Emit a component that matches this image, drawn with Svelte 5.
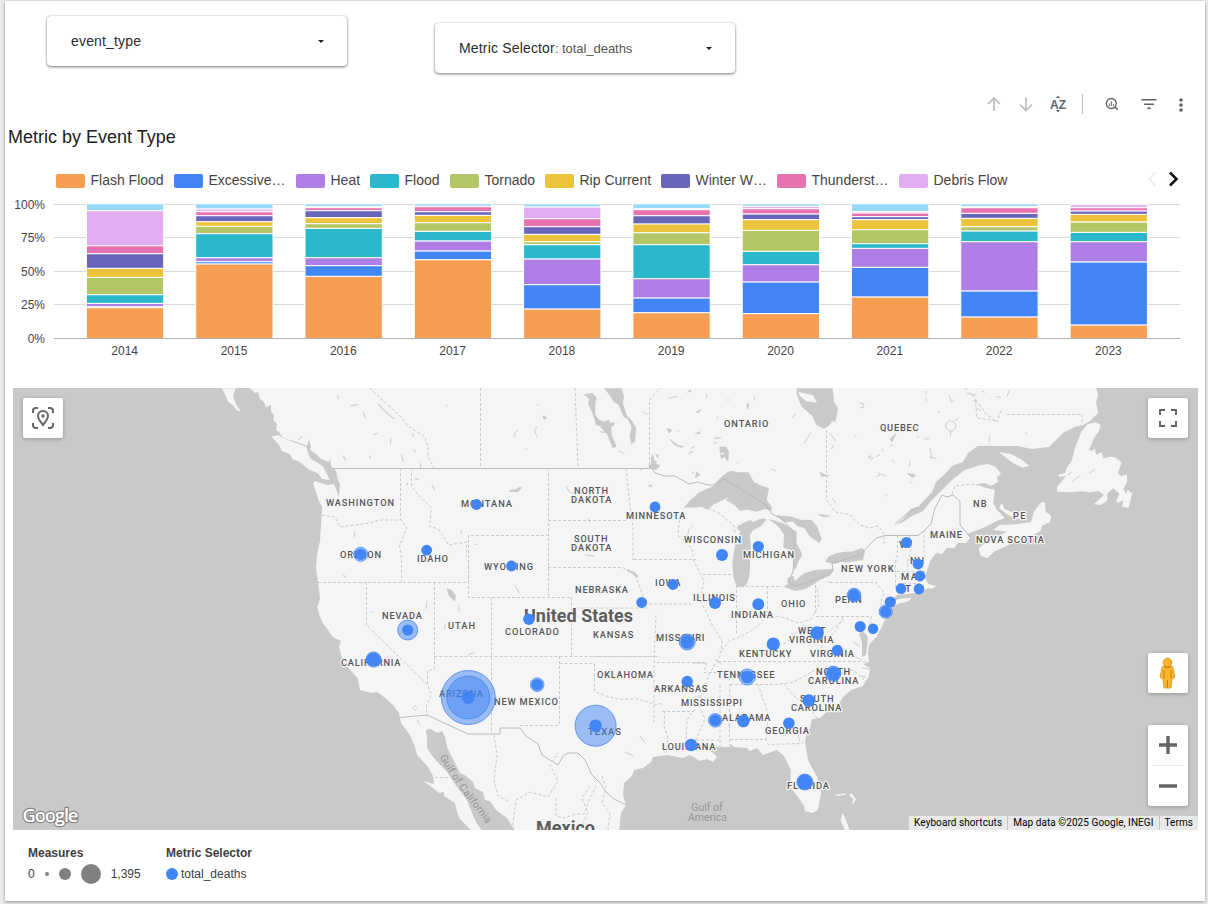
<script>
  const colors = ['#97d8f5', '#e3aef1', '#e673b0', '#6766ba', '#ebc43b', '#b4c766', '#2bb8cb', '#ae7ee6', '#4285f4', '#f69e52'];
  // Segment boundaries in thirds of a pixel, from the 100% line down to the axis.
  const years = [
    { year: 2014, cuts: [28, 46, 151, 175, 219, 246, 298, 324, 334, 337, 430] },
    { year: 2015, cuts: [28, 41, 49, 61, 79, 93, 115, 187, 199, 206, 430] },
    { year: 2016, cuts: [28, 34, 37, 46, 67, 85, 99, 187, 211, 243, 430] },
    { year: 2017, cuts: [28, 33, 34, 49, 60, 82, 108, 137, 167, 193, 430] },
    { year: 2018, cuts: [28, 35, 70, 94, 117, 139, 148, 191, 268, 341, 430] },
    { year: 2019, cuts: [28, 40, 43, 61, 86, 112, 148, 250, 308, 352, 430] },
    { year: 2020, cuts: [28, 33, 40, 56, 73, 105, 168, 208, 260, 355, 430] },
    { year: 2021, cuts: [28, 49, 53, 64, 73, 103, 145, 159, 216, 305, 430] },
    { year: 2022, cuts: [28, 34, 37, 54, 69, 94, 107, 139, 287, 365, 430] },
    { year: 2023, cuts: [28, 28, 37, 47, 57, 80, 111, 139, 200, 389, 430] }
  ];
  const ticks = [['100%', 205], ['75%', 238], ['50%', 272], ['25%', 305], ['0%', 339]];
  const legend = [
    ['Flash Flood', '#f69e52'], ['Excessive…', '#4285f4'], ['Heat', '#ae7ee6'], ['Flood', '#2bb8cb'], ['Tornado', '#b4c766'],
    ['Rip Current', '#ebc43b'], ['Winter W…', '#6766ba'], ['Thunderst…', '#e673b0'], ['Debris Flow', '#e3aef1']
  ];
  // text, left, right, baseline
  const labels = [
    ['WASHINGTON', 326, 393, 506.5], ['MONTANA', 461, 511, 507.5], ['OREGON', 340, 380, 558.5], ['IDAHO', 417, 447, 562.5],
    ['WYOMING', 484, 532, 570.5], ['NORTH', 574, 607, 494.5], ['DAKOTA', 571, 610.5, 503.5], ['SOUTH', 574, 606.5, 542.5],
    ['DAKOTA', 571, 610.5, 551.5], ['MINNESOTA', 626, 684.5, 519.5], ['ONTARIO', 724, 767.5, 427.5], ['WISCONSIN', 684, 740, 543.5],
    ['MICHIGAN', 743, 793, 558.5], ['NEBRASKA', 575, 627, 593.5], ['IOWA', 655, 679.5, 586.5], ['ILLINOIS', 693, 734, 601.5],
    ['OHIO', 781, 804.5, 607.5], ['INDIANA', 731, 772, 618.5], ['PENN', 835, 860.5, 603.5], ['QUEBEC', 880, 917.5, 431.5],
    ['NEW YORK', 841, 892.5, 572.5], ['MAINE', 930, 961, 538.5], ['NB', 973, 985.5, 507.5], ['PE', 1013, 1024.5, 519.5],
    ['NOVA SCOTIA', 976, 1043, 543.5], ['VT', 899, 911, 548.5], ['NH', 910, 923, 564.5], ['MA', 901, 916, 580.5], ['CT', 898, 910, 592.5],
    ['NEVADA', 382, 421, 619.5], ['UTAH', 448, 474, 629.5], ['COLORADO', 505, 558, 635.5], ['KANSAS', 593, 632.5, 638.5],
    ['CALIFORNIA', 341, 399.5, 666.5], ['ARIZONA', 439, 482, 697.5], ['NEW MEXICO', 494, 557, 705.5], ['OKLAHOMA', 597, 652, 678.5],
    ['TEXAS', 588, 620, 735.5], ['MISSOURI', 656, 703.5, 641.5], ['ARKANSAS', 654, 706.5, 692.5], ['MISSISSIPPI', 681, 741, 706.5],
    ['ALABAMA', 722, 769.5, 721.5], ['LOUISIANA', 662, 714.5, 750.5], ['GEORGIA', 765, 808, 734.5], ['FLORIDA', 787, 828, 789.5],
    ['TENNESSEE', 717, 773.5, 678.5], ['KENTUCKY', 739, 790.5, 657.5], ['VIRGINIA', 810, 853, 657.5], ['WEST', 798, 824.5, 634.5],
    ['VIRGINIA', 789, 832.5, 643.5], ['NORTH', 816, 849, 675.5], ['CAROLINA', 808, 857.5, 684.5], ['SOUTH', 800, 832.5, 702.5], ['CAROLINA', 791, 840.5, 711.5]
  ];
  // x, y, core radius, outer radii
  const dots = [
    [476.5, 504.5, 5.4], [360.7, 554.3, 5.6, 7], [426.7, 550.2, 5.4], [511.5, 566, 5.4], [655, 507, 5.4], [722, 555, 6], [758.3, 546.5, 5.6],
    [673, 584.5, 5.4], [641.7, 602.5, 5.4], [715, 603, 6], [758.3, 604.3, 6], [854, 595, 6, 6.8], [906.5, 542.5, 5.6], [918, 564, 5.4],
    [920, 576, 5.4], [901, 588.7, 5.4], [919, 589, 5.4], [890.3, 602, 5.6], [885.7, 611.7, 5.6, 6.6], [860.2, 626.5, 5.5], [873, 628.7, 5.2],
    [407.7, 630, 5.6, 10], [373.5, 659.5, 7, 7.6], [468.3, 697.5, 6.5, 21.5, 27], [537.2, 684.7, 5.8, 6.8], [528.8, 619.2, 5.7],
    [595.6, 725.7, 6.3, 20.5], [687.2, 642, 6.8, 8], [687.2, 681.5, 5.7], [747.3, 677, 6.3, 8], [773.3, 644, 6.6], [817, 633, 6.8],
    [837.3, 650.3, 5.5], [833.3, 673.7, 6.8, 7.6], [808.7, 700.5, 6.3], [715.2, 720.3, 5.8, 6.8], [743.4, 721, 6.3], [788.9, 723.2, 5.8],
    [691, 745, 6.2], [804.8, 782, 7.4, 8]
  ];
</script>

<main class="report">
  <header class="filters">
    <div class="select"><span class="name">event_type</span><i class="caret"></i></div>
    <div class="select second"><span><span class="name">Metric Selector</span><span class="value">: total_deaths</span></span><i class="caret"></i></div>
  </header>

  <nav class="tools">
    <svg viewBox="975 90 225 28" width="225" height="28" fill="none">
      <g stroke="#bdbdbd" stroke-width="1.7">
        <path d="M994 111V98.500M988 104l6-6 6 6M1026 97.500V110M1020 104.500l6 6 6-6" />
      </g>
      <g fill="#5f6368">
        <text class="az" x="1050" y="108.500" textLength="16">AZ</text>
        <path d="M1055.800 98l2.200-2.200 2.200 2.200zM1055.800 110l2.200 2.200 2.200-2.200z" />
      </g>
      <path d="M1082.500 94v20" stroke="#bdbdbd" />
      <g stroke="#5f6368"><circle cx="1111.300" cy="103.500" r="5" stroke-width="1.300" /><path d="M1115 107l2.700 2.700" stroke-width="1.600" /><path d="M1109.300 103.500v2.500M1111.300 101.300v4.700M1113.400 104v2" stroke-width="1" /></g>
      <path d="M1141.500 99.700h15M1144 104.200h10M1147.300 108.300h3.500" stroke="#5f6368" stroke-width="1.600" />
      <g fill="#5f6368"><circle cx="1181" cy="100" r="1.800" /><circle cx="1181" cy="105" r="1.800" /><circle cx="1181" cy="110" r="1.800" /></g>
    </svg>
  </nav>

  <h1>Metric by Event Type</h1>

  <section class="legend">
    {#each legend as [name, color]}
      <span class="entry"><i style:background={color}></i>{name}</span>
    {/each}
    <svg viewBox="1143 168 40 22" width="40" height="22" fill="none"><path d="M1155.500 171.500l-6.500 6.500 6.500 6.500" stroke="#eee" stroke-width="1.800" /><path d="M1170 171.500l6.500 6.500-6.500 6.500" stroke="#111" stroke-width="2.500" /></svg>
  </section>

  <svg class="chart" viewBox="5 196 1200 168" width="1200" height="168">
    {#each ticks as [label, y]}
      <path d="M54 {y - 0.5}H1180" stroke={label === '0%' ? '#b0b0b0' : '#dadada'} />
      <text x="45" y={y + 4} text-anchor="end">{label}</text>
    {/each}
    {#each years as row, i}
      <g stroke="#fff" stroke-width="1">
        {#each colors as color, k}
          {#if row.cuts[k + 1] > row.cuts[k]}
            <rect x={86.4 + i * 109.3} y={195 + row.cuts[k] / 3 + (k ? 0.4 : -0.5)} width="77.3" height={(row.cuts[k + 1] - row.cuts[k]) / 3 + (k ? 0 : 0.9)} fill={color} />
          {/if}
        {/each}
      </g>
      <text x={124.700 + i * 109.3} y="355" text-anchor="middle">{row.year}</text>
    {/each}
    <path d="M54 338.500H1180" stroke="#b0b0b0" />
  </svg>

  <section class="map">
    <svg class="canvas" viewBox="13 388 1185 442" width="1185" height="442">
      <rect x="13" y="388" width="1185" height="442" fill="#c9c9c9" />
      <g class="land">
        <path d="M248 386L255 393 258 392 260 399 264 402 266 407 271 405 271 412 274 415 273 420 277 424 276 430 279 432 283 438 290 440 300 443 307 446 309 439 311 447 310 450 316 454 321 459 329 462 330 458 331 466 336 471 338 480 340 484 339 497 336 489 334 484 327 485 315 481 313 483 316 492 319 501 322 507 321 525 320 541 317 554 316 568 318 581 320 598 317 610 317 604 319 614 322 622 325 626 333 637 341 641 339 647 342 658 348 667 358 679 360 690 372 693 377 692 384 697 393 705 399 713 401 723 410 735 415 747 417 755 428 767 433 776 434 784 423 781 433 788 439 793 444 792 444 796 455 803 457 812 460 819 471 830 483 832 477 824 472 813 467 800 457 787 447 772 433 757 427 748 427 738 426 730 431 729 437 733 442 731 445 737 447 747 452 757 460 773 466 776 473 782 475 788 483 792 485 800 490 801 496 810 507 818 516 832 619 832 621 813 626 805 623 795 624 783 632 776 634 770 643 768 651 762 653 757 667 755 683 758 690 755 700 761 707 759 713 762 717 757 722 762 717 757 712 752 707 750 713 747 730 747 731 744 734 747 747 748 750 751 757 748 763 755 777 750 784 756 787 762 791 770 790 787 794 792 798 797 804 806 805 811 812 813 818 810 821 793 819 784 817 777 808 760 805 743 806 735 810 728 812 719 820 718 828 711 837 707 843 697 851 690 863 686 869 676 870 668 863 664 869 662 868 653 869 645 877 636 882 626 885 620 890 615 892 606 894 598 897 595 907 594 922 592 928 588 932 589 936 586 928 584 925 577 928 568 930 561 936 553 942 554 947 548 954 548 958 543 966 543 970 538 967 534 983 528 997 521 1005 518 997 510 993 503 995 490 983 487 977 484 985 483 991 486 998 482 997 477 1001 474 996 467 988 464 980 465 965 470 952 480 941 491 931 501 923 511 910 517 903 522 896 525 904 518 911 509 918 507 932 492 936 482 946 473 952 466 963 462 968 453 978 446 1017 446 1032 449 1049 447 1063 433 1075 427 1083 425 1090 421 1098 413 1096 402 1098 395 1096 386z" />
        <g transform="translate(200 385) scale(.33333)"><path d="M215 155l20-5 15 10 28 10 40 15 12 35 38 23 22 43-24-5-13-16-28-12-14-12-16-12-17-6-9-16-24-9-8-19zM65 10h42l-8 25 10 24 13 20-10-2-13-16-14-10-8-19z" /></g>
        <g transform="translate(850 385) scale(.33333)"><path d="M430 435L448 420 498 418 543 411 553 379 573 352 585 352 587 380 604 393 600 412 576 422 572 438 545 452 502 465 465 485 432 500 412 520 392 512 386 490 405 475 432 465 452 450 472 440zM455 353L463 371 485 381 523 385 528 399 498 402 470 387 448 370zM447 201L482 207 512 222 538 242 518 248 488 234 470 220zM738 112L752 120 746 140 732 158 717 195 727 198 735 189 738 209 755 202 760 220 780 215 795 217 815 232 803 264 812 274 830 268 832 290 820 310 828 327 834 313 842 325 848 318 836 368 816 365 820 345 806 353 798 350 808 326 790 310 772 326 772 346 752 360 732 358 745 345 762 330 745 318 720 322 695 319 660 322 622 320 621 306 638 285 648 272 628 276 624 270 645 264 650 248 664 230 672 200 682 170 694 140 712 118zM130 648L150 641 185 638 173 650 133 658z" /></g>
        <g transform="translate(590 600) scale(.33333)"><path d="M737 586l30-4-28 4zM784 583l12 14-8 14 4-14-12-12zM758 644l8 16 10 28h-10l-12-25 2-12zM900 12l30-7 15-5-25 12z" stroke="#f5f5f5" stroke-width="4" /></g>
      </g>

      <g fill="#c9c9c9" transform="translate(500 385) scale(.33333)">
        <path d="M550 368L572 345 596 323 640 303 660 280 684 260 698 257 710 262 746 262 762 292 785 302 807 310 800 345 815 365 815 377 795 372 770 380 742 374 720 378 706 362 690 352 678 346 688 333 696 331 662 348 642 358 622 374 606 366zM712 424L738 410 753 405 758 412 778 403 792 400 800 404 782 424 760 436 750 448 752 480 750 545 748 575 738 602 722 606 710 604 700 575 697 530 703 495 708 465 722 440 712 432z" />
        <path d="M804 402L820 406 848 414 872 430 890 440 890 475 898 490 907 510 895 530 888 550 880 555 879 500 862 492 850 488 852 450 840 430 825 416zM828 390L876 395 902 404 935 405 952 425 965 462 958 474 930 455 912 428 892 424 880 410 850 410zM850 605L864 597 862 580 880 572 884 588 912 565 945 555 1002 552 990 572 960 584 938 600 915 612 885 618zM975 530L987 514 1011 504 1050 499V533L1024 531 1002 537zM890 10h108l4 40 12 20-8 42-10-4-6 12-18 12-22-12-14-28-32-28-14-38zM312 10h52l8 24-3 22 12 36 14 14 14 24-4 40-12 8-4-24 6-28-12-24-12-6-16-38-14-6-10-18zM250 28L278 24 290 40 286 56 286 90 298 104 312 110 326 104 332 114 344 112 342 122 334 125 335 150 350 185 338 189 322 150 300 124 288 120 278 86 264 56 268 42z" />
        <path d="M454 222l4-14 4 18 8 4-4 6 14 6-12 12-18-4 4-14zM660 186h18l8 14-2 28-6-6-8-22-10 4zM662 208l16 4-14 8zM722 422l10 12-10 10zM130 93l8 2v8l-8-2zM110 57l6 4zM382 553l20 9 12 10-2 6-14-12-16-8zM502 130l14 6-10 8zM510 162l14 12 12 8 14 2-4 4-22-8-10-12zM590 80l12-6v4l-12 5zM600 140l-14 6 14 0zM740 60l4 12 2-18zM645 158h18l-20 3zM590 260l10 10-14 8zM955 388l20 2 14 4-20 2zM960 262l12 6 16 4-24 2zM445 303l10-4v6zM467 208l6 12 2-10zM300 140l24 3zM30 316l20-2 8-8 6 2-10 12-26 0zM522 38l10-4zM562 22l8-8 4 4z" stroke="#c9c9c9" stroke-width="2" />
      </g>
      <path d="M798 392l15 3 4 8-11-2-6-5z" fill="#f5f5f5" />
      <path d="M850 552L862 548 865 551 863 560 850 562z" fill="#c9c9c9" />
      <path d="M862 631L866 634 868 638 866 655 862 657 862 642 859 634zM869 620l2 8 4 6-4-2z" fill="#c9c9c9" />
      <g fill="none" stroke="#cdcdcd" stroke-width="1.2">
        <g transform="translate(200 385) scale(.33333)" stroke-width="3.500"><path d="M535 57l18 20 30 26M412 30l4 12M452 62l22-3M490 80l6 20M520 150l14-6M572 160v16M604 208l6 22M642 192l4 10M638 145l3 10M662 235v14M430 212l8 16M296 165l10-12M620 292l3 8M697 300l6 14M645 281l12 2M465 440l-2 16M430 571l8 6M783 435l2 10M826 478h6M508 212l4 8M740 60v4M485 592v6" /><path d="M742 612l12 4 12 16-2 14-16-14z" fill="#c9c9c9" /></g>
        <g transform="translate(500 385) scale(.33333)" stroke-width="3"><path d="M42 156l4-14 8-6M110 124l-6 16 8 16M75 190l8 5M200 305l8 16 14 5M255 510l30 3M265 400l5 12M428 80l14 8M356 198l18 8M912 176l20-33M990 145l16 22M876 97l14-12M985 80l20-12M1000 180l-6 12M44 600l14 24M580 420l-14 14-3 16M420 255l6-3M650 100l4-5M585 185l-12 5M815 252l12 6M998 340l8 14M470 350l6-2M580 200l-10 2M505 40l16-4M620 40v-12M680 45h8M762 47l3-12M640 175l12-4M565 205l8-1M710 232l6 2M575 265l8-3M530 135l8 4" /></g>
        <g transform="translate(850 385) scale(.33333)" stroke-width="3"><path d="M28 54l14 3-2 10-10 1M20 150l-6 6M55 215l14 4-8 6M90 270l-4-8M78 275l18-8 12 8M180 228l-2 16M224 163l14-4M238 215l22 6M240 190l6 30M370 45l10 10M328 98l-14 10M418 152v18M478 15l-6 18M527 142l4 6M665 262l-12 8M667 288l24-16M735 252l-18 14M350 25l30 5M105 335l4-6M130 180l-10 4M302 138v15M62 210l-8 12M78 215l12-6M298 30l6 22 10-8M228 18v10M226 38l6 10M182 290l4 6M262 78l8 4M200 155l6 2M125 225l8 8M95 192l6 8M380 70l12 6M395 18l10 4M440 35l12 2" /><circle cx="302" cy="123" r="15" /><path d="M120 163l18-18-12 26zM172 265l24 5-8 8z" fill="#c9c9c9" /></g>
        <path d="M427 601l-1 8M459 605v7M468 655l7-3M412 707l4 4M417 720l3 5M371 611l2 2M414 705l3 3M445 624v6M715 659l3 3 4 2M692 663l14 0M640 736l5 7M625 752l9 4M862 660l-8-4M870 669l-8-1M866 677l-6-1M800 742l-2-6M804 790l-3-3M730 728l-1-5M860 646l-7-4" stroke-width="1" />
      </g>

      <g fill="none" stroke="#bababa" stroke-width="1">
        <path d="M333 468.500H649.500V465L655 473 665 476 675 476 689 484 698 482 708 485 713 485 724 479 727 481 765 504 772 514 782 519 793 531 795 550 793 572 788 582 795 586 806 583 822 577 833 571 832 563 850 558 860 555 876 538 885 535.500H918L924 531 931 524 935 508 942 495 947 497 953 495 960 501V525L967 533 970 537M400 717.500L427 715 468 734H500V728H520L526 736 538 744 542 755 550 760 558 765 563 756 568 753H578L585 760 592 775 600 783 607 793 614 799 626 805" />
        <path d="M895 524L903 517 910 511 918 507" stroke="#b8b8b8" />
      </g>
      <g fill="none" stroke="#cacaca" stroke-width="1" stroke-dasharray="3 2">
        <path d="M370 388l8 8 22 20 8 10 17 11 3 10v9l6 12M480.500 388v80M575 388l3 80M649.500 465v-65l11-12M826.500 430v70l9 12 15 3M322 515l13 2 5 10 30-4 10-3h21M400.500 468v50l6 10-7 18 2 12v24M411.500 468v18l8 10 12 12-2 18 9 3 10 16 18-3v14M318 582.500h150.500V535.500H548M548.500 468v128M468.500 561v36.500h103M366.500 582v43l61 60 4 10-5 10v12M434.500 582v75M434.500 656.500H660M434.500 656.500V669l-7 2v13M491.500 597.500v137M571.500 597.500v58M548 520.500h80M548 567.500h74l12 5 6 15 6 17M571.500 597v11h76M559.500 656v69M559.500 663.500h35v28l10 4 15 4 16-1 20 6 6-1M520 725.500h39.500M626 468l3 30 4 30 0 32M634 559.500h62M649 604h42M656 615l-2 50v57M656 656.500h-66M657 662.500h50l-3 10h14M704 506l16 8 14 12 1 8M680 515l-2 20 14 14 2 12 10 20-4 20 6 10 6 14 10 16-1 13-12 21-8 20-1 12 5 12-10 22" />
        <path d="M703 574.500h30M736.500 585v50M736 586.500h46M767.500 586v30l-12 12-14 8-12 5-10 12M767 619l12-3 20 7 12-4 8-14 -2-18M815.500 585v30M816 616.500h55v14M830 582.500h46l8 10-4 12 5 7M831 582h-6M718 661.500h150M730 684.500h46l16-2 12-6 14-8 20-1 4 3h12l16 15M720 685v68M730 684l-1 40 1 22M758 684l10 30-2 28M730 739.500h36l2 5 34-1 3-4M662 711.500h32M665 711l-1 15 4 12-2 15M696 740h26M784 684l10 12 16 12 8 12M804 625l-18 18-12 2-10 10M820 640l10-10 14-10M843 617l-6 12-14 16-9 12M700 690l-3 16-10 14-1 20M897.500 535v20l-2 8v24M909 535l3 10-4 16-1 10M924 530l0 33-2 5M897 571.500h28M898 583.500h22M850 515l10 10 10 3 8-2 6 8v10M952 494l3-8 18-2 12 3M976 400l10 14 11 8 5-14M1007 414.500h75v8M965 388l10 10 2 20 20 3M494 735l3 20-3 25 4 16 12 6M512 830l4-30 14-8 18 5 10-16-8-16 8-12M556 798l0 18 8 2 12-4 8 0 6-16 6-12M435 777.500h18M590 786l-8 12 6 14-8 18M602 776l4 12-4 14 8 12-2 16" />
      </g>

      <g class="states">
        {#each labels as [text, left, right, y]}
          <text x={left} y={y - 0.3} textLength={right - left + 1}>{text}</text>
        {/each}
      </g>
      <text class="country" x="524" y="622" textLength="109">United States</text>
      <text class="country" x="536" y="834" textLength="59">Mexico</text>
      <g class="sea">
        <text x="707" y="811" text-anchor="middle">Gulf of</text>
        <text x="707.500" y="821" text-anchor="middle">America</text>
        <path id="gulf" d="M439.500 757c6 11 12 20 22 34 10 13 16 20 25 33" fill="none" />
        <text><textPath href="#gulf" textLength="82">Gulf of California</textPath></text>
      </g>

      <g>
        {#each dots as [x, y, core, ...outer]}
          {#each outer as r}
            <circle cx={x} cy={y} {r} fill="#4285f4" fill-opacity=".5" stroke="#4285f4" stroke-width=".8" />
          {/each}
          <circle cx={x} cy={y} r={core} fill="#4285f4" />
        {/each}
      </g>
      <text class="google" x="22.500" y="822" textLength="56">Google</text>
    </svg>

    <button class="ctl lens" aria-label="Select area">
      <svg viewBox="0 0 40 40" width="40" height="40" fill="none" stroke="#666" stroke-width="2"><path d="M10 15v-2q0-3 3-3h2M25 10h2q3 0 3 3v2M30 25v2q0 3-3 3h-2M15 30h-2q-3 0-3-3v-2" /><path d="M20 27c-3-4-5-6-5-9a5 5 0 0 1 10 0c0 3-2 5-5 9z" /><circle cx="20" cy="18" r="1.700" fill="#666" stroke="none" /></svg>
    </button>
    <button class="ctl full" aria-label="Fullscreen">
      <svg viewBox="0 0 40 40" width="40" height="40" fill="none" stroke="#666" stroke-width="2"><path d="M12 17v-5h5M23 12h5v5M28 23v5h-5M17 28h-5v-5" /></svg>
    </button>
    <button class="ctl peg" aria-label="Street view">
      <svg viewBox="0 0 40 40" width="40" height="40"><path d="M14 15q0-2 2-2h7q2 0 2 2l2 9-3 2-1 9h-7l-1-9-3-2z" fill="#fbb62a" stroke="#c58a1e" stroke-width=".7" /><circle cx="19.500" cy="9.500" r="4.300" fill="#fbb62a" stroke="#c58a1e" stroke-width=".8" /><path d="M16 13.500q3.500 3 7 0M16 17v8M23 17v8M19.500 27v8" fill="none" stroke="#b97712" stroke-width=".9" /></svg>
    </button>
    <div class="ctl zoom">
      <svg viewBox="0 0 40 81" width="40" height="81" fill="none"><path d="M11 20h18M20 11v18M11 61h18" stroke="#666" stroke-width="3.400" /><path d="M5 40.500h30" stroke="#e6e6e6" /></svg>
    </div>
    <div class="credits"><span>Keyboard shortcuts</span><span>Map data ©2025 Google, INEGI</span><span>Terms</span></div>
  </section>

  <footer>
    <div class="measures"><b>Measures</b><div class="scale"><span>0</span><i class="s"></i><i class="m"></i><i class="l"></i><span>1,395</span></div></div>
    <div><b>Metric Selector</b><div class="scale"><i class="blue"></i><span>total_deaths</span></div></div>
  </footer>
</main>

<style>
  :global(body) { margin: 0; background: #ebebeb; }
  .report { box-sizing: border-box; width: 1200px; height: 900px; margin: 1px 0 3px 5px; background: #fff; box-shadow: 0 1px 3px #0006; overflow: hidden; font-family: "Liberation Sans", Arial, sans-serif; color: #222; }
  .filters { display: flex; gap: 88px; height: 73px; padding: 15px 0 0 42px; box-sizing: border-box; }
  .select { display: flex; align-items: center; justify-content: space-between; box-sizing: border-box; width: 300px; height: 50px; padding: 0 22px 0 24px; border-radius: 4px; box-shadow: 0 1px 3px #0008, 0 0 1px #0004; font-size: 14px; }
  .second { margin-top: 7px; }
  .name { color: #2b2b2b; letter-spacing: .17px; }
  .value { font-size: 13px; color: #555; letter-spacing: -.05px; }
  .caret { border: 3.5px solid transparent; border-top-color: #222; border-bottom: 0; margin-right: 1.5px; }
  .tools { height: 43px; padding: 16px 0 0 970px; box-sizing: border-box; }
  svg { display: block; }
  .az { font: bold 12px "Liberation Sans", sans-serif; }
  h1 { margin: 8px 0 0 3px; height: 32px; line-height: 24px; font-size: 18px; font-weight: 400; color: #212121; }
  .legend { display: grid; grid-template-columns: 118px 122px 74px 80px 95px 116px 116px 122px 244px 40px; align-items: center; height: 22px; margin: 12px 0 0 51px; }
  .entry { display: flex; align-items: center; gap: 5.5px; height: 22px; font-size: 14px; line-height: 22px; color: #444; white-space: nowrap; }
  .entry i { width: 29px; height: 14px; margin-top: 2px; border-radius: 2px; }
  .chart { margin-top: 5px; }
  .chart text { font-size: 12px; fill: #444; }
  .map { position: relative; width: 1185px; height: 442px; margin: 24px 0 0 8px; overflow: hidden; }
  .land { fill: #f5f5f5; }
  .states text { font: 500 9.3px Roboto, sans-serif; fill: #565656; stroke: #f5f5f5; stroke-width: 2.5px; stroke-linejoin: round; paint-order: stroke; }
  .country { font: bold 18px Roboto, sans-serif; fill: #5d5d5d; stroke: #f5f5f5; stroke-width: 2.5px; paint-order: stroke; }
  .sea text { font: 10.5px Roboto, sans-serif; fill: #979797; }
  .google { font: 600 18.5px "Open Sans", sans-serif; fill: #fff; stroke: #868686; stroke-width: 2.4px; stroke-linejoin: round; paint-order: stroke; }
  .ctl { position: absolute; left: 1135px; width: 40px; height: 40px; padding: 0; border: 0; border-radius: 2px; background: #fff; box-shadow: 0 1px 4px #0004; }
  .lens { left: 10px; top: 10px; }
  .full { top: 10px; }
  .peg { top: 265px; }
  .zoom { top: 337px; height: 81px; }
  .credits { position: absolute; right: 0; bottom: 0; display: flex; height: 14px; background: #e9e9e9; font: 400 10px/14px Roboto, sans-serif; letter-spacing: .07px; color: #000; white-space: nowrap; }
  .credits span { padding: 0 5px; }
  .credits span + span { border-left: 1px solid #c4c4c4; }
  footer { display: flex; margin: 15px 0 0 23px; font-size: 12px; color: #3c4043; }
  .measures { width: 138px; }
  footer b { display: block; height: 16px; line-height: 16px; }
  .scale { display: flex; align-items: center; height: 26px; }
  .scale i { border-radius: 50%; background: #808080; }
  .s { width: 4px; height: 4px; margin: 0 10px; }
  .m { width: 12px; height: 12px; }
  .l { width: 20px; height: 20px; margin: 0 10px; }
  .scale .blue { width: 12px; height: 12px; margin-right: 3px; background: #4285f4; }
</style>
